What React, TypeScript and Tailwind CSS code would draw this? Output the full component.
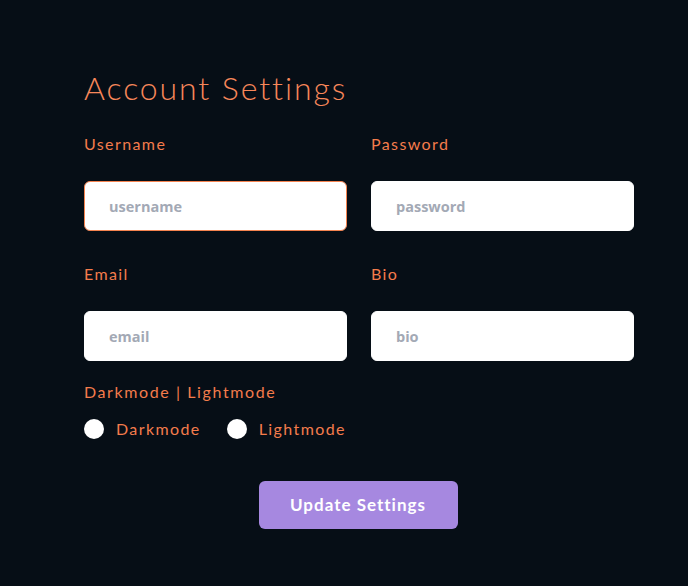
import { useState } from 'react';

const labelFont = { fontFamily: '"Lato", "Noto Sans", sans-serif' };

function Field({ label, placeholder, focused }: { label: string; placeholder: string; focused?: boolean }) {
  return (
    <div className="flex flex-col">
      <label className="h-5 leading-5 text-[16px] text-[#f47c4c] tracking-[1.4px]" style={labelFont}>
        {label}
      </label>
      <input
        placeholder={placeholder}
        className={`mt-[27px] h-[50px] w-full rounded-md bg-white pl-[24px] text-[14.5px] font-bold text-gray-700 placeholder:text-[#a3a9b5] outline-none font-['Open_Sans',sans-serif] ${
          focused ? 'border border-[#f4834f]' : 'border border-white'
        }`}
      />
    </div>
  );
}

export default function App() {
  const [mode, setMode] = useState<string>('');

  return (
    <div className="min-h-[586px] w-full bg-[#060e16] px-[84px] pt-[68px]">
      <h1 className="h-10 leading-10 text-[32px] text-[#f7875a] font-light tracking-[1.9px]" style={labelFont}>
        Account Settings
      </h1>

      <div className="mt-[26px] grid w-[550px] grid-cols-2 gap-x-6 gap-y-[33px]">
        <Field label="Username" placeholder="username" focused />
        <Field label="Password" placeholder="password" />
        <Field label="Email" placeholder="email" />
        <Field label="Bio" placeholder="bio" />
      </div>

      <p className="mt-[21px] h-5 leading-5 text-[16px] text-[#f47c4c] tracking-[1.6px]" style={labelFont}>
        Darkmode | Lightmode
      </p>

      <div className="mt-[17px] flex items-center gap-[26px]">
        {['Darkmode', 'Lightmode'].map((m) => (
          <label key={m} className="flex cursor-pointer items-center gap-3" onClick={() => setMode(m)}>
            <span className="flex h-5 w-5 items-center justify-center rounded-full bg-white">
              {mode === m && <span className="h-2.5 w-2.5 rounded-full bg-[#a688e0]" />}
            </span>
            <span className="text-[16px] leading-5 text-[#f47c4c] tracking-[1.4px]" style={labelFont}>
              {m}
            </span>
          </label>
        ))}
      </div>

      <div className="mt-[42px] flex w-[548px] justify-center">
        <button
          className="h-12 w-[199px] rounded-md bg-[#a688e0] text-[17px] font-bold tracking-[1px] text-white"
          style={labelFont}
        >
          Update Settings
        </button>
      </div>
    </div>
  );
}
